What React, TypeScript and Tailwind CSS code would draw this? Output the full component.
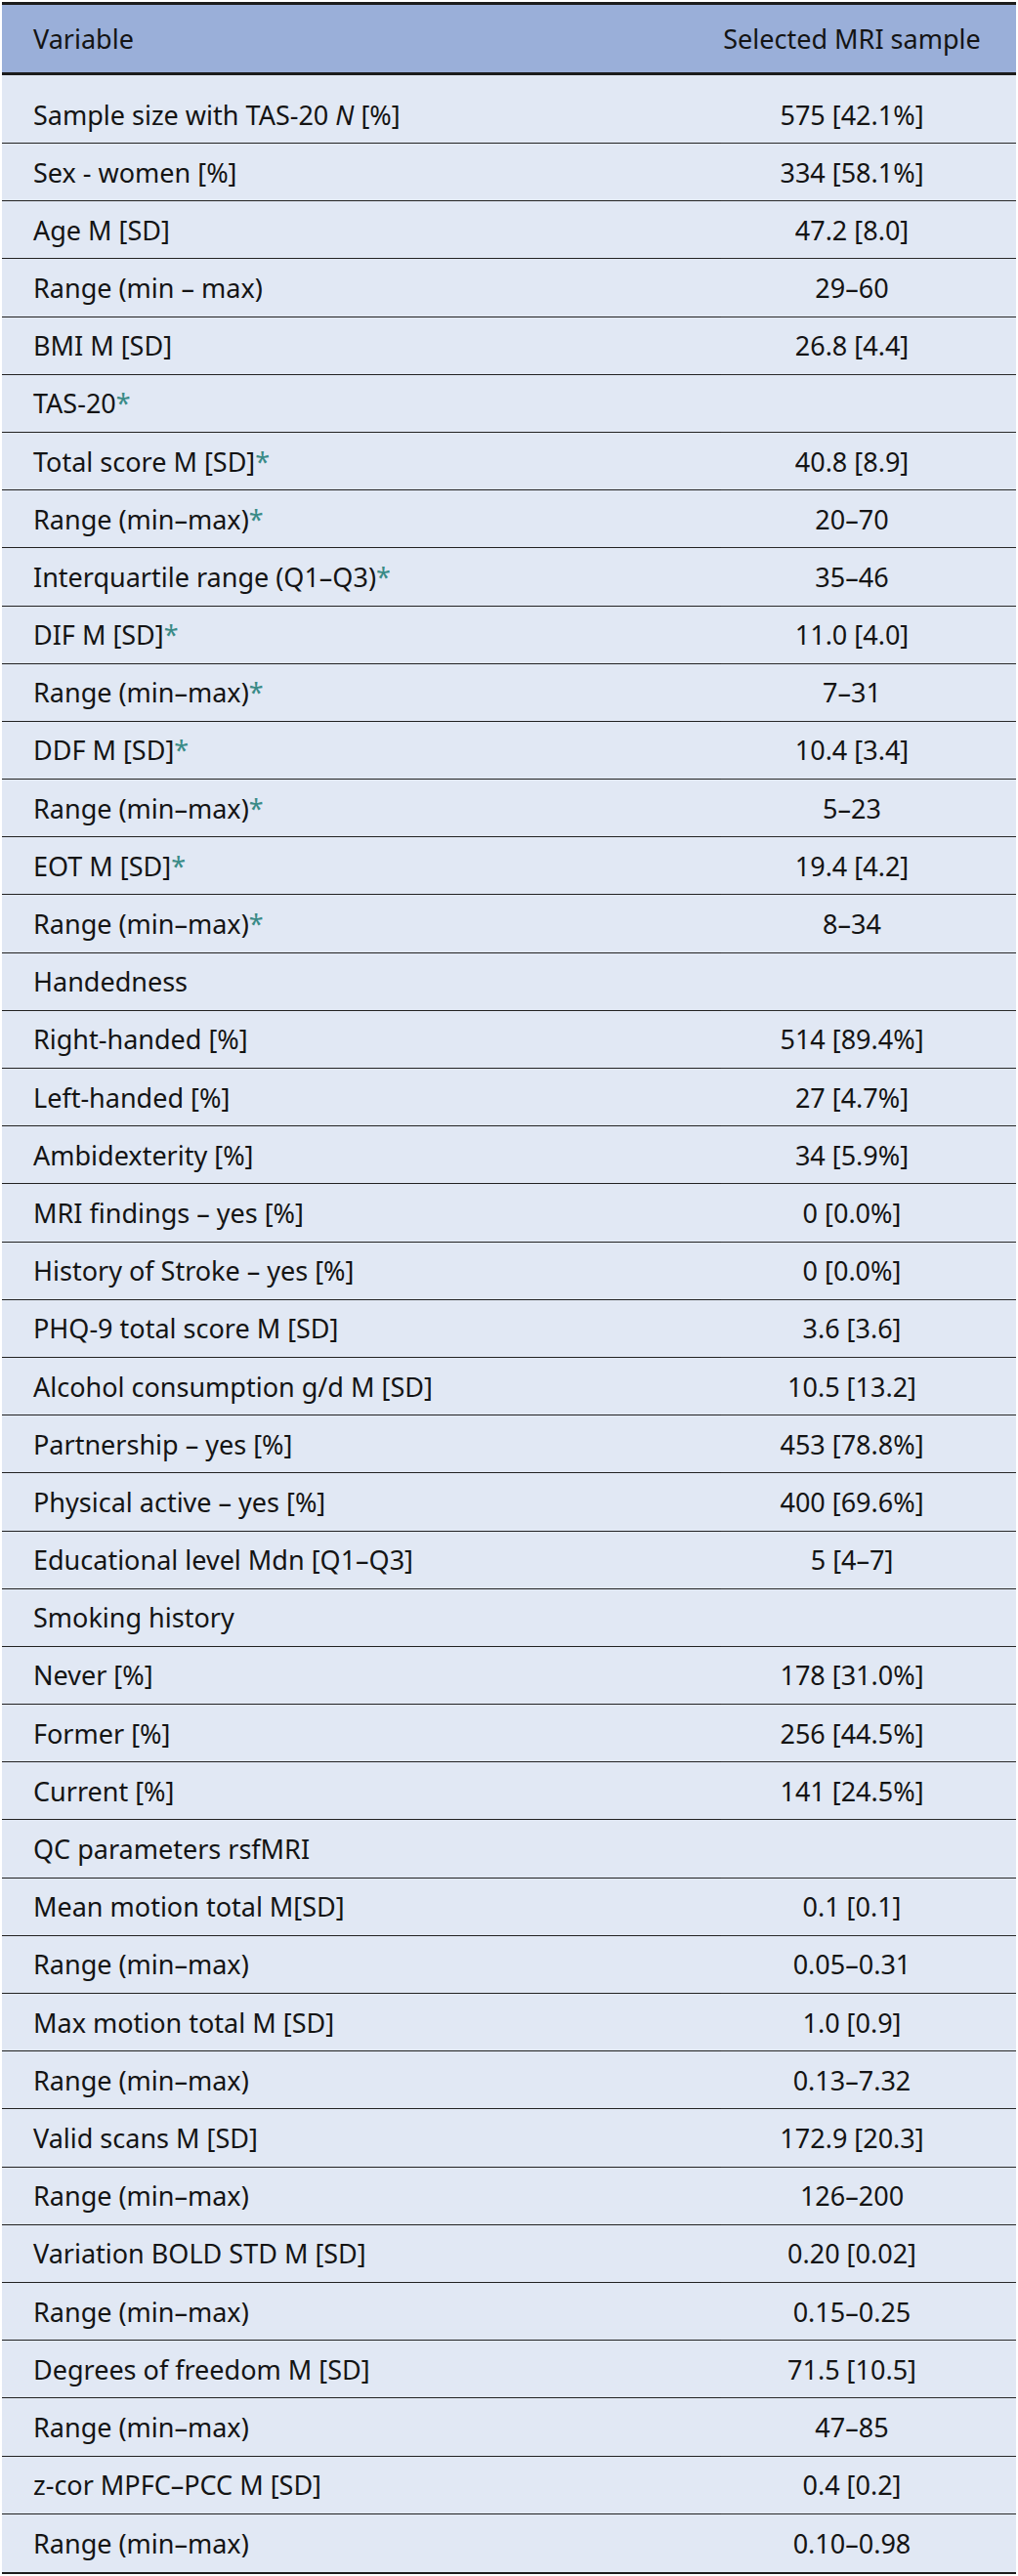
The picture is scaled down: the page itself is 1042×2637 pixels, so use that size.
import React from "react";

type Row = { label: React.ReactNode; value: string };

const Star = () => <span className="text-[#3a8b87]">*</span>;

const rows: Row[] = [
  { label: <>Sample size with TAS-20 <i>N</i> [%]</>, value: "575 [42.1%]" },
  { label: "Sex - women [%]", value: "334 [58.1%]" },
  { label: "Age M [SD]", value: "47.2 [8.0]" },
  { label: "Range (min – max)", value: "29–60" },
  { label: "BMI M [SD]", value: "26.8 [4.4]" },
  { label: <>TAS-20<Star /></>, value: "" },
  { label: <>Total score M [SD]<Star /></>, value: "40.8 [8.9]" },
  { label: <>Range (min–max)<Star /></>, value: "20–70" },
  { label: <>Interquartile range (Q1–Q3)<Star /></>, value: "35–46" },
  { label: <>DIF M [SD]<Star /></>, value: "11.0 [4.0]" },
  { label: <>Range (min–max)<Star /></>, value: "7–31" },
  { label: <>DDF M [SD]<Star /></>, value: "10.4 [3.4]" },
  { label: <>Range (min–max)<Star /></>, value: "5–23" },
  { label: <>EOT M [SD]<Star /></>, value: "19.4 [4.2]" },
  { label: <>Range (min–max)<Star /></>, value: "8–34" },
  { label: "Handedness", value: "" },
  { label: "Right-handed [%]", value: "514 [89.4%]" },
  { label: "Left-handed [%]", value: "27 [4.7%]" },
  { label: "Ambidexterity [%]", value: "34 [5.9%]" },
  { label: "MRI findings – yes [%]", value: "0 [0.0%]" },
  { label: "History of Stroke – yes [%]", value: "0 [0.0%]" },
  { label: "PHQ-9 total score M [SD]", value: "3.6 [3.6]" },
  { label: "Alcohol consumption g/d M [SD]", value: "10.5 [13.2]" },
  { label: "Partnership – yes [%]", value: "453 [78.8%]" },
  { label: "Physical active – yes [%]", value: "400 [69.6%]" },
  { label: "Educational level Mdn [Q1–Q3]", value: "5 [4–7]" },
  { label: "Smoking history", value: "" },
  { label: "Never [%]", value: "178 [31.0%]" },
  { label: "Former [%]", value: "256 [44.5%]" },
  { label: "Current [%]", value: "141 [24.5%]" },
  { label: "QC parameters rsfMRI", value: "" },
  { label: "Mean motion total M[SD]", value: "0.1 [0.1]" },
  { label: "Range (min–max)", value: "0.05–0.31" },
  { label: "Max motion total M [SD]", value: "1.0 [0.9]" },
  { label: "Range (min–max)", value: "0.13–7.32" },
  { label: "Valid scans M [SD]", value: "172.9 [20.3]" },
  { label: "Range (min–max)", value: "126–200" },
  { label: "Variation BOLD STD M [SD]", value: "0.20 [0.02]" },
  { label: "Range (min–max)", value: "0.15–0.25" },
  { label: "Degrees of freedom M [SD]", value: "71.5 [10.5]" },
  { label: "Range (min–max)", value: "47–85" },
  { label: "z-cor MPFC–PCC M [SD]", value: "0.4 [0.2]" },
  { label: "Range (min–max)", value: "0.10–0.98" },
];

export default function App() {
  return (
    <div
      className="w-[1042px] h-[2637px] bg-white pt-[2px] px-[2px]"
      style={{ fontFamily: '"Noto Sans", "Open Sans", sans-serif' }}
    >
      <div className="w-[1038px] border-t-[3px] border-b-[2px] border-[#1c1c1c] text-[27px] text-[#141414] leading-none">
        <div className="grid grid-cols-[736px_302px] h-[72px] bg-[#9aafd9] border-b-[3px] border-[#1c1c1c]">
          <div className="flex items-center px-[32px]">Variable</div>
          <div className="flex items-center justify-center pr-[34px] whitespace-nowrap">
            Selected MRI sample
          </div>
        </div>
        {rows.map((r, i) => {
          const first = i === 0;
          const last = i === rows.length - 1;
          return (
            <div
              key={i}
              className={
                "grid grid-cols-[736px_302px] bg-[#e1e8f4] " +
                (first ? "h-[70px] pt-[11px] " : "h-[59.2px] ")
              }
            >
              <div
                className={
                  "flex items-center px-[32px] whitespace-nowrap " +
                  (last ? "" : "border-b border-[#222222]")
                }
              >
                <span>{r.label}</span>
              </div>
              <div
                className={
                  "flex items-center justify-center pr-[34px] whitespace-nowrap " +
                  (last ? "" : "border-b border-[#2a2a2a]")
                }
              >
                {r.value}
              </div>
            </div>
          );
        })}
      </div>
    </div>
  );
}
